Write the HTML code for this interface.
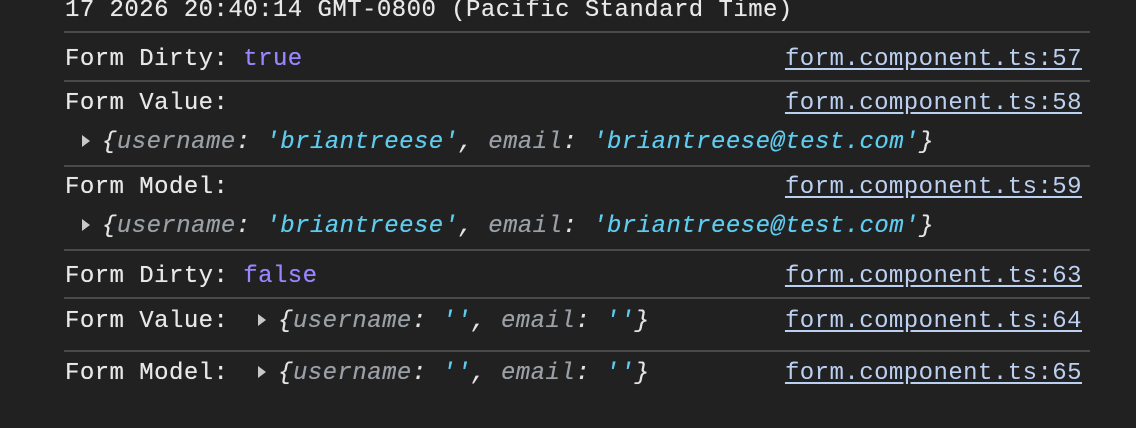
<!DOCTYPE html>
<html><head><meta charset="utf-8"><style>
html,body{margin:0;padding:0;}
body{width:1136px;height:428px;background:#212121;position:relative;overflow:hidden;
font-family:"Liberation Mono",monospace;font-size:24px;letter-spacing:0.45px;color:#e8e8e8;}
.t{position:absolute;white-space:pre;line-height:28px;text-shadow:0 0 0.4px currentColor;}
.hr{position:absolute;left:64px;width:1026px;height:2px;background:#4a4a4a;}
.l{position:absolute;right:54px;white-space:pre;line-height:28px;color:#bcd0f2;text-decoration:underline;text-underline-offset:3px;}
.b{color:#9b84ff}
.k{color:#9aa0a6;font-style:italic}
.s{color:#5fcbee;font-style:italic}
.p{font-style:italic;color:#e3e3e3}
.tri{display:inline-block;width:0;height:0;border-top:6px solid transparent;border-bottom:6px solid transparent;border-left:8px solid #c8c8c8;margin-right:12px;vertical-align:1px;}
</style></head><body>
<div class="t" style="left:65px;top:-3px">17 2026 20:40:14 GMT-0800 (Pacific Standard Time)</div>
<div class="hr" style="top:31px"></div>
<div class="t" style="left:65px;top:46px">Form Dirty: <span class="b">true</span></div>
<div class="l" style="top:46px">form.component.ts:57</div>
<div class="hr" style="top:80px"></div>
<div class="t" style="left:65px;top:90px">Form Value:</div>
<div class="l" style="top:90px">form.component.ts:58</div>
<div class="t" style="left:82px;top:129px"><span class="tri"></span><span class="p">{</span><span class="k">username</span><span class="p">: </span><span class="s">'briantreese'</span><span class="p">, </span><span class="k">email</span><span class="p">: </span><span class="s">'briantreese@test.com'</span><span class="p">}</span></div>
<div class="hr" style="top:165px"></div>
<div class="t" style="left:65px;top:174px">Form Model:</div>
<div class="l" style="top:174px">form.component.ts:59</div>
<div class="t" style="left:82px;top:213px"><span class="tri"></span><span class="p">{</span><span class="k">username</span><span class="p">: </span><span class="s">'briantreese'</span><span class="p">, </span><span class="k">email</span><span class="p">: </span><span class="s">'briantreese@test.com'</span><span class="p">}</span></div>
<div class="hr" style="top:249px"></div>
<div class="t" style="left:65px;top:263px">Form Dirty: <span class="b">false</span></div>
<div class="l" style="top:263px">form.component.ts:63</div>
<div class="hr" style="top:297px"></div>
<div class="t" style="left:65px;top:308px">Form Value:  <span class="tri"></span><span class="p">{</span><span class="k">username</span><span class="p">: </span><span class="s">''</span><span class="p">, </span><span class="k">email</span><span class="p">: </span><span class="s">''</span><span class="p">}</span></div>
<div class="l" style="top:308px">form.component.ts:64</div>
<div class="hr" style="top:350px"></div>
<div class="t" style="left:65px;top:360px">Form Model:  <span class="tri"></span><span class="p">{</span><span class="k">username</span><span class="p">: </span><span class="s">''</span><span class="p">, </span><span class="k">email</span><span class="p">: </span><span class="s">''</span><span class="p">}</span></div>
<div class="l" style="top:360px">form.component.ts:65</div>
</body></html>
